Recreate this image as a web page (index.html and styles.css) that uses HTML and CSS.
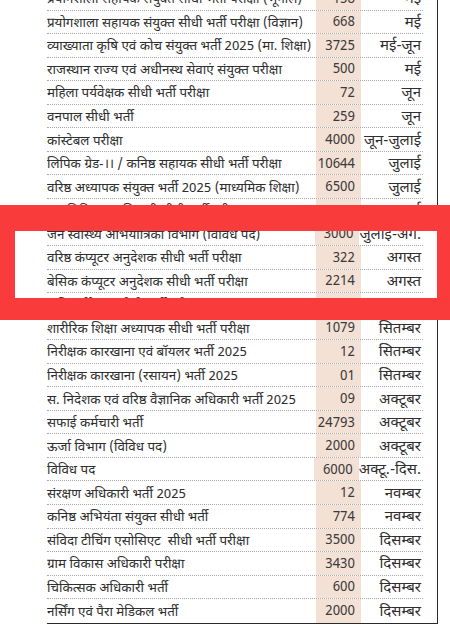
FILE: index.html
```html
<!DOCTYPE html>
<html lang="hi">
  <head>
    <meta charset="UTF-8" />
    <meta name="viewport" content="width=device-width, initial-scale=1.0" />
    <title>भर्ती परीक्षा कैलेंडर</title>
    <link rel="stylesheet" href="styles.css">
  </head>
  <body>
    <div class="clipping">
      <div class="exam-table">
        <div class="exam-row"><span class="exam-name">प्रयोगशाला सहायक संयुक्त सीधी भर्ती परीक्षा (भूगोल)</span><span class="exam-posts">158</span><span class="exam-month">मई</span></div>
        <div class="exam-row"><span class="exam-name">प्रयोगशाला सहायक संयुक्त सीधी भर्ती परीक्षा (विज्ञान)</span><span class="exam-posts">668</span><span class="exam-month">मई</span></div>
        <div class="exam-row"><span class="exam-name">व्याख्याता कृषि एवं कोच संयुक्त भर्ती 2025 (मा. शिक्षा)</span><span class="exam-posts">3725</span><span class="exam-month">मई-जून</span></div>
        <div class="exam-row"><span class="exam-name">राजस्थान राज्य एवं अधीनस्थ सेवाएं संयुक्त परीक्षा</span><span class="exam-posts">500</span><span class="exam-month">मई</span></div>
        <div class="exam-row"><span class="exam-name">महिला पर्यवेक्षक सीधी भर्ती परीक्षा</span><span class="exam-posts">72</span><span class="exam-month">जून</span></div>
        <div class="exam-row"><span class="exam-name">वनपाल सीधी भर्ती</span><span class="exam-posts">259</span><span class="exam-month">जून</span></div>
        <div class="exam-row"><span class="exam-name">कांस्टेबल परीक्षा</span><span class="exam-posts">4000</span><span class="exam-month">जून-जुलाई</span></div>
        <div class="exam-row"><span class="exam-name">लिपिक ग्रेड-।। / कनिष्ठ सहायक सीधी भर्ती परीक्षा</span><span class="exam-posts">10644</span><span class="exam-month">जुलाई</span></div>
        <div class="exam-row"><span class="exam-name">वरिष्ठ अध्यापक संयुक्त भर्ती 2025 (माध्यमिक शिक्षा)</span><span class="exam-posts">6500</span><span class="exam-month">जुलाई</span></div>
        <div class="exam-row"><span class="exam-name">पशु चिकित्सा अधिकारी सीधी भर्ती परीक्षा</span><span class="exam-posts">1100</span><span class="exam-month">जुलाई</span></div>
        <div class="exam-row"><span class="exam-name">जन स्वास्थ्य अभियांत्रिकी विभाग (विविध पद)</span><span class="exam-posts">3000</span><span class="exam-month">जुलाई-अग.</span></div>
        <div class="exam-row"><span class="exam-name">वरिष्ठ कंप्यूटर अनुदेशक सीधी भर्ती परीक्षा</span><span class="exam-posts">322</span><span class="exam-month">अगस्त</span></div>
        <div class="exam-row"><span class="exam-name">बेसिक कंप्यूटर अनुदेशक सीधी भर्ती परीक्षा</span><span class="exam-posts">2214</span><span class="exam-month">अगस्त</span></div>
        <div class="exam-row"><span class="exam-name">कृषि पर्यवेक्षक सीधी भर्ती परीक्षा</span><span class="exam-posts">1100</span><span class="exam-month">अगस्त</span></div>
        <div class="exam-row"><span class="exam-name">शारीरिक शिक्षा अध्यापक सीधी भर्ती परीक्षा</span><span class="exam-posts">1079</span><span class="exam-month">सितम्बर</span></div>
        <div class="exam-row"><span class="exam-name">निरीक्षक कारखाना एवं बॉयलर भर्ती 2025</span><span class="exam-posts">12</span><span class="exam-month">सितम्बर</span></div>
        <div class="exam-row"><span class="exam-name">निरीक्षक कारखाना (रसायन) भर्ती 2025</span><span class="exam-posts">01</span><span class="exam-month">सितम्बर</span></div>
        <div class="exam-row"><span class="exam-name">स. निदेशक एवं वरिष्ठ वैज्ञानिक अधिकारी भर्ती 2025</span><span class="exam-posts">09</span><span class="exam-month">अक्टूबर</span></div>
        <div class="exam-row"><span class="exam-name">सफाई कर्मचारी भर्ती</span><span class="exam-posts">24793</span><span class="exam-month">अक्टूबर</span></div>
        <div class="exam-row"><span class="exam-name">ऊर्जा विभाग (विविध पद)</span><span class="exam-posts">2000</span><span class="exam-month">अक्टूबर</span></div>
        <div class="exam-row"><span class="exam-name">विविध पद</span><span class="exam-posts">6000</span><span class="exam-month">अक्टू.-दिस.</span></div>
        <div class="exam-row"><span class="exam-name">संरक्षण अधिकारी भर्ती 2025</span><span class="exam-posts">12</span><span class="exam-month">नवम्बर</span></div>
        <div class="exam-row"><span class="exam-name">कनिष्ठ अभियंता संयुक्त सीधी भर्ती</span><span class="exam-posts">774</span><span class="exam-month">नवम्बर</span></div>
        <div class="exam-row"><span class="exam-name">संविदा टीचिंग एसोसिएट&nbsp; सीधी भर्ती परीक्षा</span><span class="exam-posts">3500</span><span class="exam-month">दिसम्बर</span></div>
        <div class="exam-row"><span class="exam-name">ग्राम विकास अधिकारी परीक्षा</span><span class="exam-posts">3430</span><span class="exam-month">दिसम्बर</span></div>
        <div class="exam-row"><span class="exam-name">चिकित्सक अधिकारी भर्ती</span><span class="exam-posts">600</span><span class="exam-month">दिसम्बर</span></div>
        <div class="exam-row"><span class="exam-name">नर्सिंग एवं पैरा मेडिकल भर्ती</span><span class="exam-posts">2000</span><span class="exam-month">दिसम्बर</span></div>
      </div>
    </div>

    <!-- लाल हाइलाइट फ्रेम -->
    <div class="highlight-frame"></div>
  </body>
</html>
```

FILE: styles.css
```css
* {
  margin: 0;
  padding: 0;
  box-sizing: border-box;
}

body {
  font-family: "Noto Sans Devanagari", "Noto Sans", "DejaVu Sans", sans-serif;
  background: #ffffff;
  color: #2e2e2e;
  width: 450px;
  height: 636px;
  overflow: hidden;
  position: relative;
}

.clipping {
  margin-left: 47px;
  width: 391px;
  height: 624px;
  border-right: 1.5px solid #2a2a2a;
  border-bottom: 1.5px solid #2a2a2a;
  overflow: hidden;
}

.exam-table {
  width: 376px;
  margin-top: -13px;
}

.exam-row {
  display: flex;
  align-items: center;
  height: 23.55px;
  border-bottom: 1px dotted #a8a8a8;
}

.exam-row:last-child {
  border-bottom: none;
}

.exam-name {
  width: 269px;
  padding-top: 3px;
  font-size: 13.4px;
  white-space: nowrap;
  overflow: hidden;
}

.exam-posts {
  width: 45px;
  height: 100%;
  background: #f4e1d6;
  display: flex;
  align-items: center;
  justify-content: flex-end;
  padding: 3px 6px 0 0;
  font-size: 13.5px;
  color: #3a3a3a;
}

.exam-month {
  flex: 1;
  padding-top: 3px;
  text-align: right;
  padding-right: 2px;
  font-size: 15px;
  white-space: nowrap;
}

/* लाल हाइलाइट */
.highlight-frame {
  position: absolute;
  top: 205px;
  left: 0;
  width: 450px;
  height: 115px;
  border-style: solid;
  border-color: #fa3b3b;
  border-width: 26px 13px 22px 15px;
}
```
